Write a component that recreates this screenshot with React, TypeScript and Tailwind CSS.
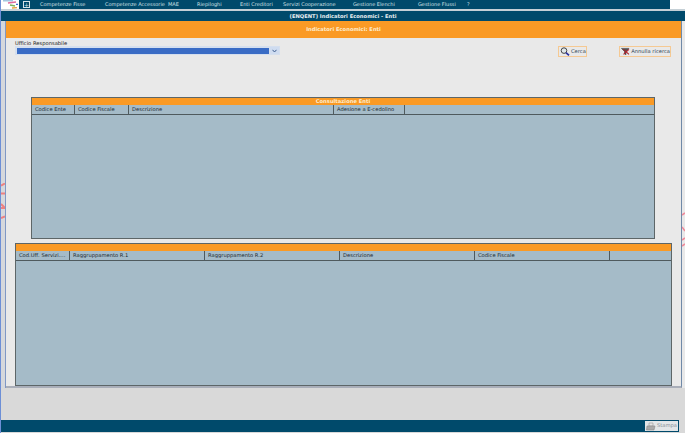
const navItems = [
  { label: "Competenze Fisse", width: "w-[65px]" },
  { label: "Competenze Accessorie  MAE", width: "w-[92px]" },
  { label: "Riepiloghi", width: "w-[43px]" },
  { label: "Enti Creditori", width: "w-[43px]" },
  { label: "Servizi Cooperazione", width: "w-[70px]" },
  { label: "Gestione Elenchi", width: "w-[65px]" },
  { label: "Gestione Flussi", width: "w-[49px]" },
  { label: "?", width: "w-[10px]" },
];

const enteColumns = [
  { label: "Codice Ente", width: "w-[43px]" },
  { label: "Codice Fiscale", width: "w-[54px]" },
  { label: "Descrizione", width: "w-[205px]" },
  { label: "Adesione a E-cedolino", width: "w-[71px]" },
];

const ufficioColumns = [
  { label: "Cod.Uff. Servizi....", width: "w-[54px]" },
  { label: "Raggruppamento R.1", width: "w-[135px]" },
  { label: "Raggruppamento R.2", width: "w-[135px]" },
  { label: "Descrizione", width: "w-[135px]" },
  { label: "Codice Fiscale", width: "w-[135px]" },
];

const Logo = () => (
  <svg width="18" height="9" viewBox="0 0 18 9">
    <path d="M2 0.8 L12 0.8" stroke="#8fb8d8" strokeWidth="1.2" fill="none" />
    <path d="M7 3 L15 2" stroke="#e06a9a" strokeWidth="1.6" fill="none" />
    <path d="M9 5 L14 6" stroke="#7ab55c" strokeWidth="1.6" fill="none" />
    <path d="M11 8 L16 7.6" stroke="#e8a33d" strokeWidth="1.4" fill="none" />
    <path d="M15 4.4 L17 4.4" stroke="#3a6cc5" strokeWidth="1.2" fill="none" />
  </svg>
);

const SearchIcon = () => (
  <svg width="10" height="9" viewBox="0 0 10 9">
    <circle cx="4" cy="3.6" r="2.8" fill="#dfe6ea" stroke="#333" strokeWidth="0.9" />
    <path d="M6 5.6 L9 8.4" stroke="#2b2f9e" strokeWidth="1.6" />
  </svg>
);

const ClearIcon = () => (
  <svg width="11" height="9" viewBox="0 0 11 9">
    <path d="M0.5 0.8 H9.5 L6 4.4 V8.4 L4.2 7.4 V4.4 Z" fill="#555" stroke="#222" strokeWidth="0.5" />
    <path d="M3 2 L9.5 8 M9.5 2 L3 8" stroke="#b3202a" strokeWidth="1.3" />
  </svg>
);

const PrintIcon = () => (
  <svg width="10" height="9" viewBox="0 0 10 9">
    <path d="M3 1 H7 V4 H3 Z" fill="#e4e4e4" stroke="#999" strokeWidth="0.6" />
    <path d="M1 4 H9 L8 8 H0.5 Z" fill="#aaa" stroke="#8a8a8a" strokeWidth="0.6" />
  </svg>
);

const GridPanel = ({
  title,
  columns,
  className,
}: {
  title?: string;
  columns: { label: string; width: string }[];
  className: string;
}) => {
  return (
    <div className={`flex flex-col border border-[#5d6668] bg-[#a5bbc8] ${className}`}>
      <div className="h-[7px] shrink-0 bg-[#fa9a25] text-center text-[5.2px] leading-[7px] font-bold text-[#fdeccd]">
        {title}
      </div>
      <div className="flex h-[10px] shrink-0 border-b border-[#4f5a5e]">
        {columns.map((column) => (
          <div
            key={column.label}
            className={`${column.width} shrink-0 truncate border-r border-[#4f5a5e] pl-[3px] text-[5.2px] leading-[9px] text-[#1c2a31]`}
          >
            {column.label}
          </div>
        ))}
      </div>
    </div>
  );
};

export default function App() {
  return (
    <div className="relative flex h-[433px] w-[685px] flex-col overflow-hidden border-l border-[#6d8fd6] bg-[#d9d9d9] font-['DejaVu_Sans',sans-serif]">
      <div className="flex h-[9px] shrink-0 bg-white">
        <div className="w-[18px] shrink-0">
          <Logo />
        </div>
        <div className="flex w-[651px] bg-[#004a6b]">
          <div className="flex w-[21px] shrink-0 items-center pl-[4px]">
            <div className="flex h-[7px] w-[7px] items-center justify-center border border-[#d5e2e8] text-[6px] leading-none text-[#d5e2e8]">
              +
            </div>
          </div>
          {navItems.map((item) => (
            <div key={item.label} className={`${item.width} shrink-0 whitespace-pre text-[5px] leading-[8px] text-[#d3e0e6]`}>
              {item.label}
            </div>
          ))}
        </div>
      </div>
      <div className="h-[2px] shrink-0 bg-[#c5d0d6]" />
      <div className="h-[10px] shrink-0 bg-[#004a6b] text-center text-[5.2px] leading-[10px] font-bold text-[#e8eef1]">
        (ENQENT) Indicatori Economici - Enti
      </div>

      <div className="flex h-[367px] shrink-0 bg-[#e9e9e9]">
        <div className="w-[5px] shrink-0 border-r border-[#8098c4] bg-[#d6d8dc]" />
        <div className="flex w-[676px] shrink-0 flex-col border-r border-b-2 border-r-[#7089a8] border-b-[#a9aeb9] bg-[#e9e9e9]">
          <div className="h-[17px] shrink-0 bg-[#fa9a25] text-center text-[5.2px] leading-[17px] font-bold text-[#fdeccd]">
            Indicatori Economici: Enti
          </div>
          <div className="flex h-[59px] shrink-0 pl-[9px] pr-[9px]">
            <div className="w-[265px] shrink-0">
              <div className="mt-[3px] h-[5px] text-[5.2px] leading-[5px] text-[#222]">Ufficio Responsabile</div>
              <div className="flex h-[9px] items-center bg-[#d5dfee] pl-[2px] pr-[1px]">
                <div className="h-[6px] w-[252px] bg-[#3a6cc5]" />
                <div className="ml-[1px] flex h-[7px] w-[9px] items-center justify-center bg-[#cfdcf0]">
                  <svg width="5" height="4" viewBox="0 0 5 4">
                    <path d="M0.5 0.8 L2.5 3 L4.5 0.8" stroke="#3f5f8f" strokeWidth="1" fill="none" />
                  </svg>
                </div>
              </div>
            </div>
            <button className="ml-[278px] mt-[8px] flex h-[11px] w-[29px] items-center gap-[1px] border border-[#f5c993] pl-[1px] text-[5.2px] whitespace-nowrap text-[#2f4656]">
              <SearchIcon />
              Cerca
            </button>
            <button className="ml-[32px] mt-[8px] flex h-[11px] w-[52px] items-center gap-[1px] border border-[#f5c993] pl-[1px] text-[5.2px] whitespace-nowrap text-[#2f4656]">
              <ClearIcon />
              Annulla ricerca
            </button>
          </div>
          <GridPanel
            title="Consultazione Enti"
            columns={enteColumns}
            className="ml-[25px] h-[142px] w-[624px] shrink-0"
          />
          <GridPanel columns={ufficioColumns} className="ml-[9px] mt-[4px] h-[143px] w-[657px] shrink-0" />
        </div>
      </div>

      <div className="h-[32px] shrink-0" />
      <div className="flex h-[12px] w-[678px] shrink-0 justify-end bg-[#004a6b] pr-[1px] pt-[1px]">
        <div className="flex h-[10px] w-[33px] items-center gap-[1px] bg-[#e2e6e8] pl-[1px] text-[5.2px] text-[#8a9298]">
          <PrintIcon />
          Stampa
        </div>
      </div>

      <svg width="4" height="36" viewBox="0 0 4 36" className="absolute top-[183px] left-0">
        <path d="M0 2.5 L4 0.5 M0 10.5 H4 M0 21 L4 25 M0 25 H4 M0 35 L4 33.5" stroke="#ee8080" strokeWidth="2" fill="none" />
      </svg>
      <svg width="3" height="36" viewBox="0 0 3 36" className="absolute top-[212px] right-0">
        <path d="M3 1 L0 3 M0 15 L3 19 M3 26 L0 28 M3 32 L0 34" stroke="#ee8a9a" strokeWidth="1.6" fill="none" />
      </svg>
    </div>
  );
}
